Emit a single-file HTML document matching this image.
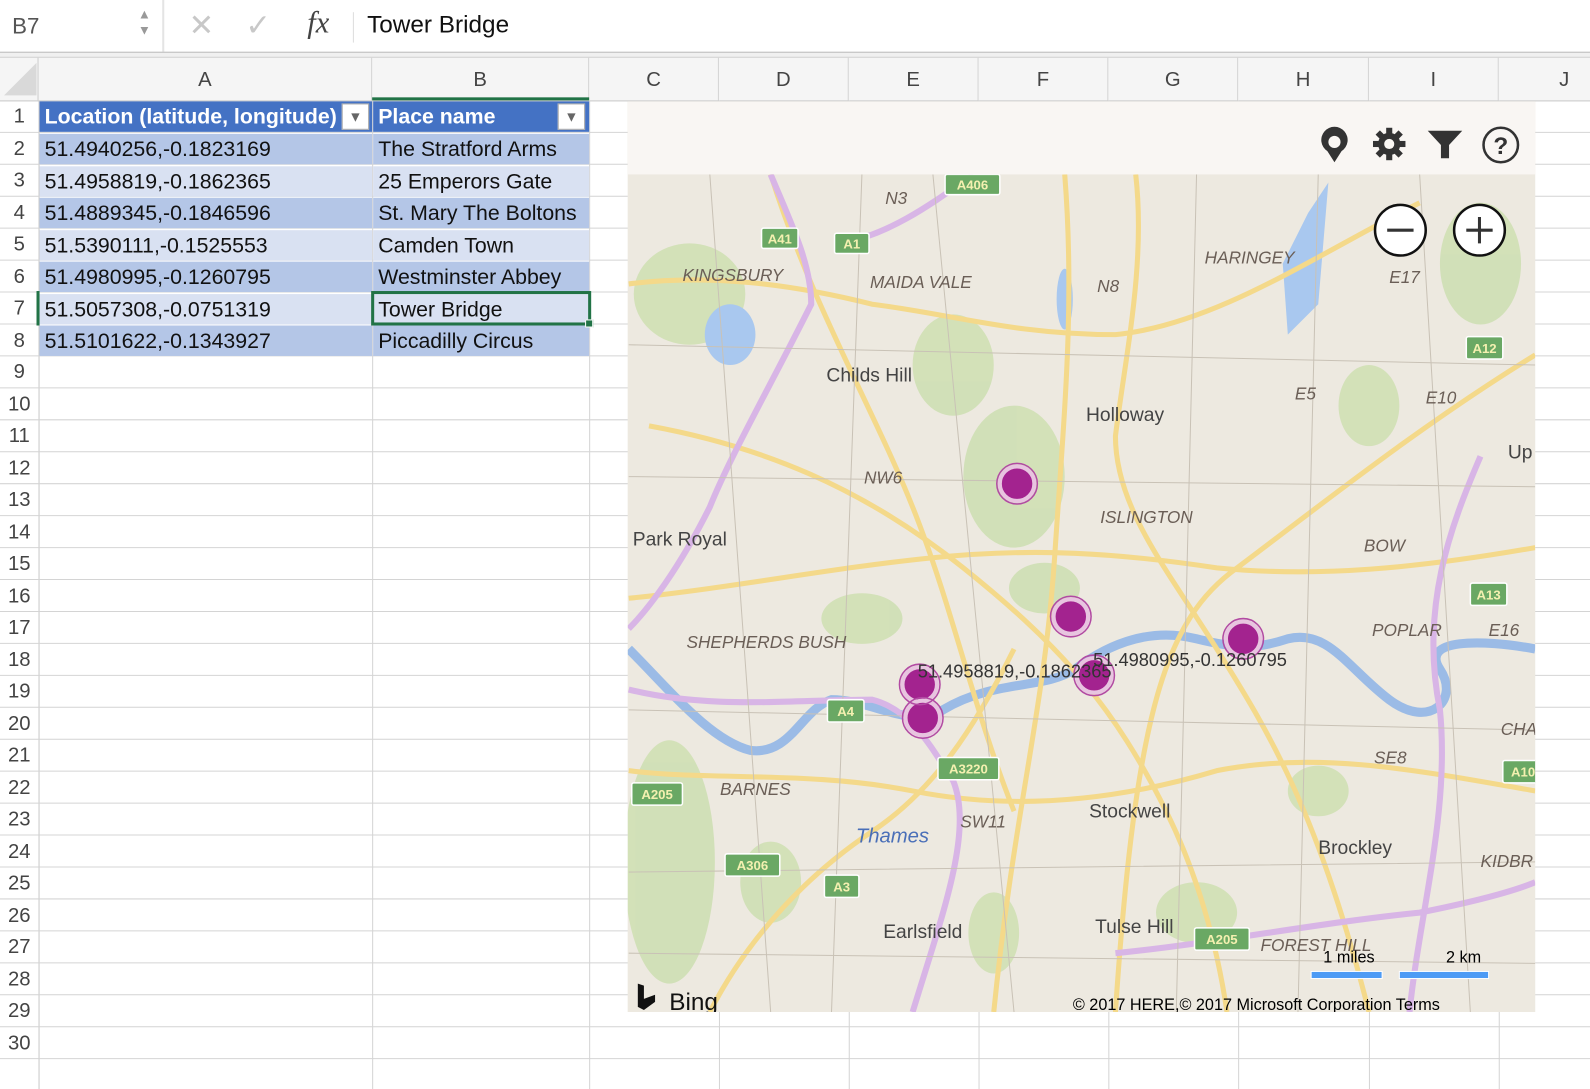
<!DOCTYPE html>
<html><head><meta charset="utf-8"><style>
*{margin:0;padding:0;box-sizing:border-box}
html,body{width:1590px;height:1074px;overflow:hidden;background:#fff}
#w{position:absolute;left:0;top:0;width:1568px;height:1060px;transform:scale(1.01403);transform-origin:0 0;font-family:"Liberation Sans",sans-serif}
.a{position:absolute}
.cell{position:absolute;font-size:21px;line-height:31px;padding-left:5px;color:#111;white-space:nowrap;overflow:hidden}
.rn{position:absolute;left:0;width:38px;text-align:center;font-size:20px;color:#444;line-height:31px}
.ch{position:absolute;top:57px;height:42px;line-height:44px;text-align:center;font-size:20px;color:#444;border-right:1px solid #d4d4d4}
.lbl{font-family:"Liberation Sans",sans-serif;font-size:19px;fill:#444}
.it{font-style:italic;font-size:17px;fill:#6a5e56}
.sh rect{fill:#6aa864;stroke:#fff;stroke-width:1.5}
.sh text{fill:#f4f0b0;font-size:13px;font-weight:bold;text-anchor:middle;font-family:"Liberation Sans",sans-serif}
</style></head><body><div id="w">
<div class="a" style="left:0;top:0;width:1590px;height:52px;background:#fff"></div>
<div class="a" style="left:12px;top:13px;font-size:22px;color:#555">B7</div>
<div class="a" style="left:136px;top:6px;font-size:13px;color:#999;line-height:16px">▲<br>▼</div>
<div class="a" style="left:160px;top:0;width:2px;height:52px;background:#e4e4e4"></div>
<div class="a" style="left:186px;top:8px;font-size:30px;color:#c8c8c8">✕</div>
<div class="a" style="left:242px;top:8px;font-size:30px;color:#c8c8c8">✓</div>
<div class="a" style="left:303px;top:6px;font-size:30px;color:#444;font-family:'Liberation Serif',serif;font-style:italic">fx</div>
<div class="a" style="left:348px;top:12px;width:1px;height:30px;background:#ddd"></div>
<div class="a" style="left:362px;top:11px;font-size:24px;color:#111">Tower Bridge</div>
<div class="a" style="left:0;top:51px;width:1590px;height:6px;border-top:1px solid #bbb;border-bottom:1px solid #ccc;background:#f0f0f0"></div>
<div class="a" style="left:0;top:57px;width:1590px;height:43px;background:#f5f5f5;border-bottom:1px solid #c8c8c8"></div>
<div class="a" style="left:0;top:57px;width:38px;height:42px;border-right:1px solid #ccc"></div>
<svg class="a" style="left:4px;top:62px" width="32" height="34"><polygon points="32,0 32,32 0,32" fill="#d9d9d9"/></svg>
<div class="ch" style="left:38px;width:329px">A</div>
<div class="ch" style="left:367px;width:214px">B</div>
<div class="ch" style="left:581px;width:128px">C</div>
<div class="ch" style="left:709px;width:128px">D</div>
<div class="ch" style="left:837px;width:128px">E</div>
<div class="ch" style="left:965px;width:128px">F</div>
<div class="ch" style="left:1093px;width:128px">G</div>
<div class="ch" style="left:1221px;width:129px">H</div>
<div class="ch" style="left:1350px;width:128px">I</div>
<div class="ch" style="left:1478px;width:130px">J</div>
<div class="a" style="left:367px;top:96px;width:214px;height:3px;background:#217346"></div>
<svg class="a" style="left:0;top:99px" width="1590" height="975">
<g stroke="#d4d4d4" stroke-width="1">
<line x1="38.5" y1="0" x2="38.5" y2="975" stroke="#c8c8c8"/>
<line x1="367.5" y1="0" x2="367.5" y2="975"/><line x1="581.5" y1="0" x2="581.5" y2="975"/>
<line x1="709.5" y1="0" x2="709.5" y2="975"/><line x1="837.5" y1="0" x2="837.5" y2="975"/>
<line x1="965.5" y1="0" x2="965.5" y2="975"/><line x1="1093.5" y1="0" x2="1093.5" y2="975"/>
<line x1="1221.5" y1="0" x2="1221.5" y2="975"/><line x1="1350.5" y1="0" x2="1350.5" y2="975"/>
<line x1="1478.5" y1="0" x2="1478.5" y2="975"/>
<line x1="0" y1="31.5" x2="1590" y2="31.5"/><line x1="0" y1="63" x2="1590" y2="63"/><line x1="0" y1="94.5" x2="1590" y2="94.5"/><line x1="0" y1="126" x2="1590" y2="126"/><line x1="0" y1="157.5" x2="1590" y2="157.5"/><line x1="0" y1="189" x2="1590" y2="189"/><line x1="0" y1="220.5" x2="1590" y2="220.5"/><line x1="0" y1="252" x2="1590" y2="252"/><line x1="0" y1="283.5" x2="1590" y2="283.5"/><line x1="0" y1="315" x2="1590" y2="315"/><line x1="0" y1="346.5" x2="1590" y2="346.5"/><line x1="0" y1="378" x2="1590" y2="378"/><line x1="0" y1="409.5" x2="1590" y2="409.5"/><line x1="0" y1="441" x2="1590" y2="441"/><line x1="0" y1="472.5" x2="1590" y2="472.5"/><line x1="0" y1="504" x2="1590" y2="504"/><line x1="0" y1="535.5" x2="1590" y2="535.5"/><line x1="0" y1="567" x2="1590" y2="567"/><line x1="0" y1="598.5" x2="1590" y2="598.5"/><line x1="0" y1="630" x2="1590" y2="630"/><line x1="0" y1="661.5" x2="1590" y2="661.5"/><line x1="0" y1="693" x2="1590" y2="693"/><line x1="0" y1="724.5" x2="1590" y2="724.5"/><line x1="0" y1="756" x2="1590" y2="756"/><line x1="0" y1="787.5" x2="1590" y2="787.5"/><line x1="0" y1="819" x2="1590" y2="819"/><line x1="0" y1="850.5" x2="1590" y2="850.5"/><line x1="0" y1="882" x2="1590" y2="882"/><line x1="0" y1="913.5" x2="1590" y2="913.5"/><line x1="0" y1="945" x2="1590" y2="945"/>
</g></svg>
<div class="rn" style="top:100px">1</div><div class="rn" style="top:131.5px">2</div><div class="rn" style="top:163px">3</div><div class="rn" style="top:194.5px">4</div><div class="rn" style="top:226px">5</div><div class="rn" style="top:257.5px">6</div><div class="rn" style="top:289px">7</div><div class="rn" style="top:320.5px">8</div><div class="rn" style="top:352px">9</div><div class="rn" style="top:383.5px">10</div><div class="rn" style="top:415px">11</div><div class="rn" style="top:446.5px">12</div><div class="rn" style="top:478px">13</div><div class="rn" style="top:509.5px">14</div><div class="rn" style="top:541px">15</div><div class="rn" style="top:572.5px">16</div><div class="rn" style="top:604px">17</div><div class="rn" style="top:635.5px">18</div><div class="rn" style="top:667px">19</div><div class="rn" style="top:698.5px">20</div><div class="rn" style="top:730px">21</div><div class="rn" style="top:761.5px">22</div><div class="rn" style="top:793px">23</div><div class="rn" style="top:824.5px">24</div><div class="rn" style="top:856px">25</div><div class="rn" style="top:887.5px">26</div><div class="rn" style="top:919px">27</div><div class="rn" style="top:950.5px">28</div><div class="rn" style="top:982px">29</div><div class="rn" style="top:1013.5px">30</div>
<div class="cell" style="left:39px;top:100px;width:328px;height:30px;background:#4472c4;color:#fff;font-weight:bold">Location (latitude, longitude)</div>
<div class="cell" style="left:368px;top:100px;width:213px;height:30px;background:#4472c4;color:#fff;font-weight:bold">Place name</div>
<div class="a" style="left:337px;top:102px;width:27px;height:26px;background:#fff;border:1px solid #aaa;color:#666;font-size:14px;text-align:center;line-height:24px">▼</div>
<div class="a" style="left:550px;top:102px;width:27px;height:26px;background:#fff;border:1px solid #aaa;color:#666;font-size:14px;text-align:center;line-height:24px">▼</div>
<div class="cell" style="left:39px;top:132px;width:328px;height:30px;background:#b4c6e7">51.4940256,-0.1823169</div>
<div class="cell" style="left:368px;top:132px;width:213px;height:30px;background:#b4c6e7">The Stratford Arms</div>
<div class="cell" style="left:39px;top:163.5px;width:328px;height:30px;background:#d9e1f2">51.4958819,-0.1862365</div>
<div class="cell" style="left:368px;top:163.5px;width:213px;height:30px;background:#d9e1f2">25 Emperors Gate</div>
<div class="cell" style="left:39px;top:195px;width:328px;height:30px;background:#b4c6e7">51.4889345,-0.1846596</div>
<div class="cell" style="left:368px;top:195px;width:213px;height:30px;background:#b4c6e7">St. Mary The Boltons</div>
<div class="cell" style="left:39px;top:226.5px;width:328px;height:30px;background:#d9e1f2">51.5390111,-0.1525553</div>
<div class="cell" style="left:368px;top:226.5px;width:213px;height:30px;background:#d9e1f2">Camden Town</div>
<div class="cell" style="left:39px;top:258px;width:328px;height:30px;background:#b4c6e7">51.4980995,-0.1260795</div>
<div class="cell" style="left:368px;top:258px;width:213px;height:30px;background:#b4c6e7">Westminster Abbey</div>
<div class="cell" style="left:39px;top:289.5px;width:328px;height:30px;background:#d9e1f2">51.5057308,-0.0751319</div>
<div class="cell" style="left:368px;top:289.5px;width:213px;height:30px;background:#d9e1f2">Tower Bridge</div>
<div class="cell" style="left:39px;top:321px;width:328px;height:30px;background:#b4c6e7">51.5101622,-0.1343927</div>
<div class="cell" style="left:368px;top:321px;width:213px;height:30px;background:#b4c6e7">Piccadilly Circus</div>
<div class="a" style="left:366px;top:287px;width:217px;height:34px;border:3px solid #217346"></div>
<div class="a" style="left:577px;top:315px;width:8px;height:8px;background:#217346;border:1px solid #fff"></div>
<div class="a" style="left:36px;top:287px;width:3px;height:34px;background:#217346"></div>
<div class="a" style="left:619px;top:100px;width:895px;height:898px;overflow:hidden;background:#ede9e0">
<div class="a" style="left:0;top:0;width:895px;height:72px;background:#f9f6f3"></div>
<svg class="a" style="left:0;top:72px" width="895" height="826" viewBox="619 172 895 826">
<g fill="#cfe0b4" opacity=".9">
<ellipse cx="1000" cy="470" rx="50" ry="70"/><ellipse cx="940" cy="360" rx="40" ry="50"/><ellipse cx="680" cy="290" rx="55" ry="50"/>
<ellipse cx="850" cy="610" rx="40" ry="25"/><ellipse cx="660" cy="850" rx="45" ry="120"/><ellipse cx="1030" cy="580" rx="35" ry="25"/>
<ellipse cx="760" cy="870" rx="30" ry="40"/><ellipse cx="1460" cy="260" rx="40" ry="60"/><ellipse cx="1350" cy="400" rx="30" ry="40"/>
<ellipse cx="1180" cy="900" rx="40" ry="30"/><ellipse cx="980" cy="920" rx="25" ry="40"/><ellipse cx="1300" cy="780" rx="30" ry="25"/>
</g>
<g fill="#a9c8ef">
<path d="M1265 260 L1290 210 L1310 180 L1300 300 L1270 330 Z"/><ellipse cx="1050" cy="295" rx="8" ry="30"/><ellipse cx="720" cy="330" rx="25" ry="30"/>
</g>
<path d="M620 640 C660 680 700 730 740 740 C780 745 790 700 820 690 C860 690 900 720 930 700 C980 670 1030 680 1060 660 C1100 630 1140 620 1180 630 C1220 640 1240 640 1270 630 C1310 620 1330 660 1370 690 C1410 720 1440 690 1420 660 C1400 630 1460 630 1514 640"
 fill="none" stroke="#9bbbe6" stroke-width="9"/>
<g fill="none" stroke="#f4d98a" stroke-width="5">
<path d="M620 280 C700 270 780 280 860 300 C940 310 1000 330 1100 330 C1200 320 1300 250 1400 200"/>
<path d="M620 590 C720 580 820 560 920 550 C1020 540 1100 545 1200 560 C1300 570 1400 560 1514 540"/>
<path d="M640 420 C750 440 850 480 950 560 C1050 640 1100 700 1150 800 C1180 860 1200 930 1210 998"/>
<path d="M1050 172 C1060 300 1050 400 1040 550 C1030 700 1000 800 980 998"/>
<path d="M760 172 C800 300 860 400 900 500 C940 600 960 700 1000 800"/>
<path d="M1514 350 C1400 420 1300 500 1220 560 C1150 610 1120 700 1100 998"/>
<path d="M620 760 C700 770 800 760 900 780 C1000 800 1100 790 1200 760 C1300 740 1400 760 1514 780"/>
<path d="M1120 172 C1130 260 1110 350 1100 430 C1100 500 1150 560 1200 640 C1250 720 1300 800 1350 998"/>
<path d="M700 998 C740 920 800 860 860 820 C920 780 960 720 1000 640"/>
</g>
<g fill="none" stroke="#d8b5e6" stroke-width="6">
<path d="M760 172 C780 220 800 260 800 300 C760 380 720 450 700 500 C670 560 640 600 620 620"/>
<path d="M620 680 C700 700 780 690 860 690 C900 700 920 740 940 770 C960 820 930 900 900 998"/>
<path d="M1460 450 C1430 520 1400 600 1420 700 C1430 800 1400 900 1390 998"/>
<path d="M1100 940 C1200 930 1300 910 1400 900 C1450 890 1490 880 1514 870"/>
<path d="M830 240 C880 230 920 200 960 172"/>
</g>
<g fill="none" stroke="#c9c2b6" stroke-width="1">
<path d="M700 172 L760 998 M850 172 L820 998 M920 172 L1000 998 M1180 172 L1160 998 M1300 172 L1280 998 M1400 172 L1450 998"/>
<path d="M620 340 L1514 360 M620 470 L1514 480 M620 700 L1514 720 M620 860 L1514 850 M620 940 L1514 950"/>
</g>
<g class="sh">
<g><rect x="932" y="172" width="54" height="20" rx="2"/><text x="959" y="187">A406</text></g>
<g><rect x="751" y="225" width="36" height="20" rx="2"/><text x="769" y="240">A41</text></g>
<g><rect x="823" y="230" width="34" height="20" rx="2"/><text x="840" y="245">A1</text></g>
<g><rect x="1446" y="332" width="36" height="22" rx="2"/><text x="1464" y="348">A12</text></g>
<g><rect x="1450" y="575" width="36" height="22" rx="2"/><text x="1468" y="591">A13</text></g>
<g><rect x="816" y="690" width="36" height="22" rx="2"/><text x="834" y="706">A4</text></g>
<g><rect x="925" y="747" width="60" height="22" rx="2"/><text x="955" y="763">A3220</text></g>
<g><rect x="623" y="772" width="50" height="22" rx="2"/><text x="648" y="788">A205</text></g>
<g><rect x="715" y="842" width="54" height="22" rx="2"/><text x="742" y="858">A306</text></g>
<g><rect x="813" y="863" width="34" height="22" rx="2"/><text x="830" y="879">A3</text></g>
<g><rect x="1178" y="915" width="54" height="22" rx="2"/><text x="1205" y="931">A205</text></g>
<g><rect x="1482" y="750" width="40" height="22" rx="2"/><text x="1502" y="766">A10</text></g>
</g>
<g class="lbl">
<text x="815" y="376">Childs Hill</text><text x="1071" y="415">Holloway</text><text x="624" y="538">Park Royal</text>
<text x="1074" y="806">Stockwell</text><text x="1300" y="842">Brockley</text><text x="871" y="925">Earlsfield</text><text x="1080" y="920">Tulse Hill</text><text x="1487" y="452">Up</text>
</g>
<g class="lbl it">
<text x="673" y="277">KINGSBURY</text><text x="858" y="284">MAIDA VALE</text><text x="873" y="201">N3</text><text x="1082" y="288">N8</text>
<text x="1188" y="260">HARINGEY</text><text x="1370" y="279">E17</text><text x="1277" y="394">E5</text><text x="1406" y="398">E10</text>
<text x="852" y="477">NW6</text><text x="1085" y="516">ISLINGTON</text><text x="1345" y="544">BOW</text><text x="677" y="639">SHEPHERDS BUSH</text>
<text x="1353" y="627">POPLAR</text><text x="1468" y="627">E16</text><text x="710" y="784">BARNES</text><text x="947" y="816">SW11</text>
<text x="1355" y="753">SE8</text><text x="1460" y="855">KIDBR</text><text x="1243" y="938">FOREST HILL</text><text x="1480" y="725">CHA</text>
<text x="844" y="831" style="fill:#4a6fb8;font-size:20px">Thames</text>
</g>
<g stroke="#e8c4e0" stroke-width="4" fill="#a3238f">
<circle cx="1003" cy="477" r="17"/><circle cx="1056" cy="608" r="17"/><circle cx="1226" cy="630" r="17"/>
<circle cx="1079" cy="666" r="17"/><circle cx="907" cy="675" r="17"/><circle cx="910" cy="708" r="17"/>
</g>
<g fill="none" stroke="#b24aa3" stroke-width="1.5">
<circle cx="1003" cy="477" r="20"/><circle cx="1056" cy="608" r="20"/><circle cx="1226" cy="630" r="20"/>
<circle cx="1079" cy="666" r="20"/><circle cx="907" cy="675" r="20"/><circle cx="910" cy="708" r="20"/>
</g>
<text x="905" y="668" style="font-size:18px;fill:#333">51.4958819,-0.1862365</text>
<text x="1078" y="657" style="font-size:18px;fill:#333">51.4980995,-0.1260795</text>
<g><circle cx="1381" cy="227" r="25" fill="#fff" stroke="#111" stroke-width="2.5"/><line x1="1368" y1="227" x2="1394" y2="227" stroke="#333" stroke-width="3"/>
<circle cx="1459" cy="227" r="25" fill="#fff" stroke="#111" stroke-width="2.5"/><line x1="1446" y1="227" x2="1472" y2="227" stroke="#333" stroke-width="3"/><line x1="1459" y1="214" x2="1459" y2="240" stroke="#333" stroke-width="3"/></g>
<text x="1305" y="949" style="font-size:16px;fill:#000">1 miles</text><text x="1426" y="949" style="font-size:16px;fill:#000">2 km</text>
<rect x="1293" y="958" width="70" height="7" fill="#4d9bf5" stroke="#fff"/><rect x="1380" y="958" width="88" height="7" fill="#4d9bf5" stroke="#fff"/>
<text x="1058" y="996" style="font-size:16px;fill:#000">© 2017 HERE,© 2017 Microsoft Corporation  Terms</text>
<path d="M629 970 L635 972 L635 985 L646 981 L646 988 L635 996 L629 993 Z" fill="#111"/>
<text x="660" y="996" style="font-size:24px;fill:#111">Bing</text>
</svg>
<svg class="a" style="left:680px;top:22px" width="200" height="44" viewBox="1299 122 200 44">
<path d="M1316 160 L1309 149 A13 13 0 1 1 1323 149 Z" fill="#333"/><circle cx="1316" cy="140" r="6" fill="#f9f6f3"/>
<g transform="translate(1370 142)"><circle r="11" fill="#333"/><g fill="#333"><rect x="-3" y="-16" width="6" height="32"/><rect x="-16" y="-3" width="32" height="6"/><rect x="-3" y="-16" width="6" height="32" transform="rotate(45)"/><rect x="-3" y="-16" width="6" height="32" transform="rotate(-45)"/></g><circle r="5" fill="#f9f6f3"/></g>
<path d="M1408 129 L1442 129 L1429 143 L1429 156 L1421 156 L1421 143 Z" fill="#333"/>
<circle cx="1480" cy="143" r="17" fill="none" stroke="#333" stroke-width="2.5"/>
<text x="1480" y="152" text-anchor="middle" style="font-size:24px;font-weight:bold;fill:#333;font-family:'Liberation Sans',sans-serif">?</text>
</svg>
</div>
</div></body></html>
